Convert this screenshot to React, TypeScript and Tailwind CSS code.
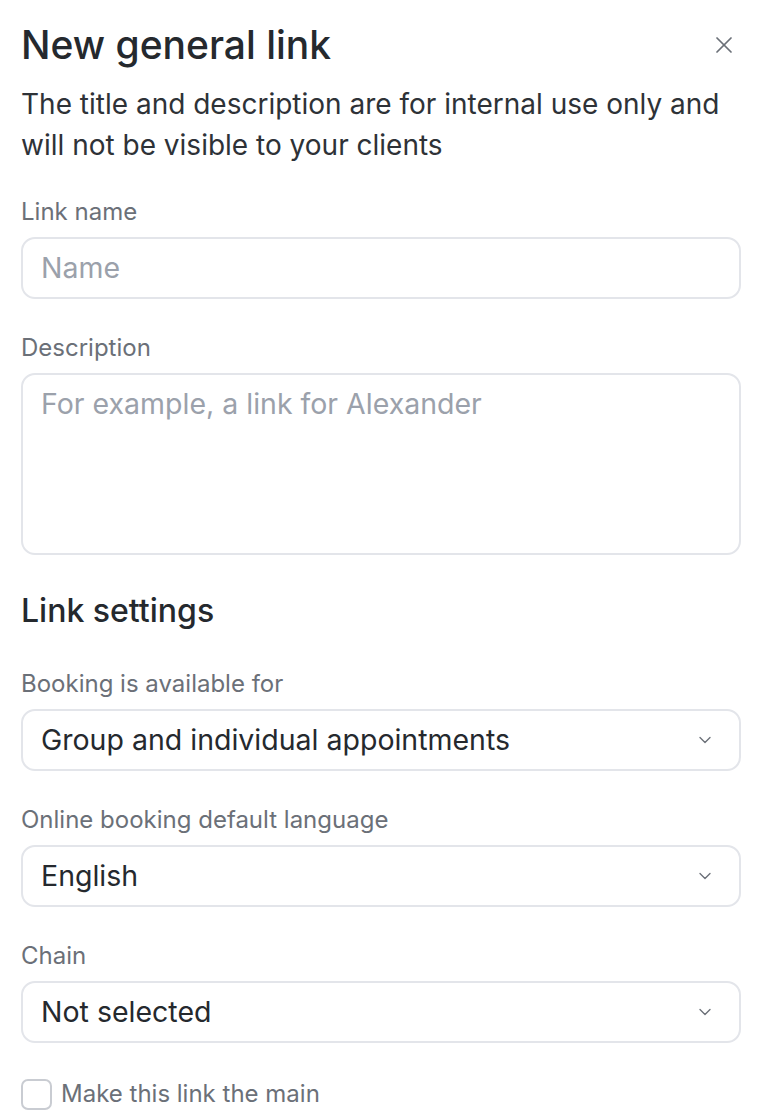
import { ChevronDown, X } from "lucide-react";

const Label = (props: { children: React.ReactNode }) => (
  <div className="text-[24px] leading-[30px] text-[#6b7078] mb-[10px]">{props.children}</div>
);

const Select = (props: { value: string }) => (
  <div className="h-[62px] rounded-[14px] border-2 border-[#e3e5ea] flex items-center justify-between pl-[18px] pr-[24px]">
    <span className="text-[28.5px] text-[#25292e]">{props.value}</span>
    <ChevronDown className="w-[20px] h-[20px] text-[#6b7078]" strokeWidth={1.6} />
  </div>
);

export default function App() {
  return (
    <div
      className="w-[762px] min-h-[1118px] bg-white px-[21px] pt-[20px] text-[#25292e]"
      style={{ fontFamily: "Inter, 'Noto Sans', sans-serif" }}
    >
      <div className="flex items-start justify-between">
        <h1 className="text-[39px] leading-[50px] font-medium text-[#25292e]">New general link</h1>
        <X className="w-[28px] h-[28px] mt-[11px] mr-[3px] text-[#6b7078]" strokeWidth={1.5} />
      </div>
      <p className="mt-[14px] text-[28px] leading-[41px] text-[#2e3237]">
        The title and description are for internal use only and will not be visible to your clients
      </p>

      <div className="mt-[31px]">
        <Label>Link name</Label>
        <div className="h-[62px] rounded-[14px] border-2 border-[#e3e5ea] flex items-center pl-[18px]">
          <span className="text-[28.5px] text-[#9ba1ab]">Name</span>
        </div>
      </div>

      <div className="mt-[34px]">
        <Label>Description</Label>
        <div className="h-[182px] rounded-[14px] border-2 border-[#e3e5ea] pl-[18px] pt-[12px]">
          <span className="text-[28.5px] leading-[34px] text-[#9ba1ab]">For example, a link for Alexander</span>
        </div>
      </div>

      <h2 className="mt-[36px] text-[32px] leading-[40px] font-medium text-[#25292e]">Link settings</h2>

      <div className="mt-[38px]">
        <Label>Booking is available for</Label>
        <Select value="Group and individual appointments" />
      </div>
      <div className="mt-[34px]">
        <Label>Online booking default language</Label>
        <Select value="English" />
      </div>
      <div className="mt-[34px]">
        <Label>Chain</Label>
        <Select value="Not selected" />
      </div>

      <label className="mt-[33px] flex items-center gap-[9px]">
        <span className="w-[31px] h-[31px] rounded-[7px] border-2 border-[#c9ccd2] bg-white" />
        <span className="text-[24px] text-[#6b7078]">Make this link the main</span>
      </label>
    </div>
  );
}
